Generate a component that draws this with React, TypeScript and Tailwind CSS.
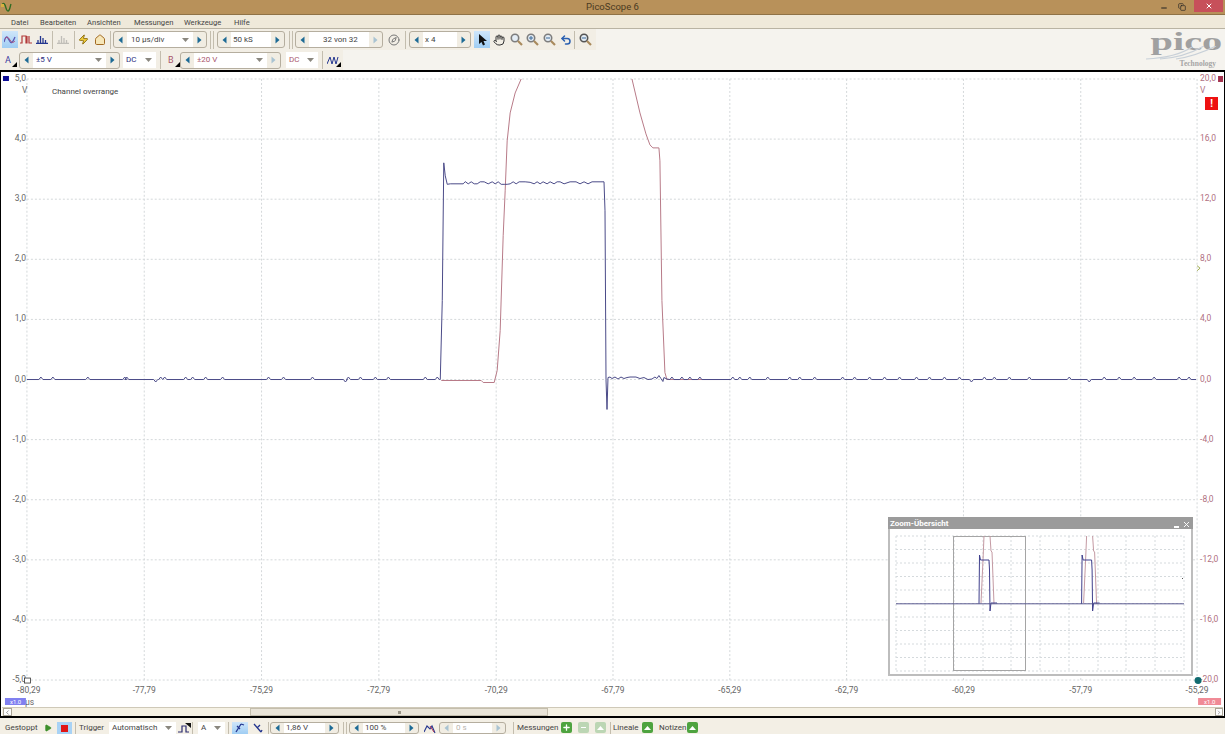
import type { ReactNode } from "react";
import { Hand, Home, Undo2, Compass, Zap, X, Minus, Copy, Play, ChevronLeft, ChevronRight, Plus } from "lucide-react";

const gridX = [26, 143.5, 261, 378.5, 496, 613, 730, 847, 964, 1081.5, 1198];
const gridY = [78, 138.2, 198.4, 258.6, 318.8, 379, 439.2, 499.4, 559.6, 619.8, 680];
const leftLabels = ["5,0", "4,0", "3,0", "2,0", "1,0", "0,0", "-1,0", "-2,0", "-3,0", "-4,0", "-5,0"];
const rightLabels = ["20,0", "16,0", "12,0", "8,0", "4,0", "0,0", "-4,0", "-8,0", "-12,0", "-16,0", "-20,0"];
const timeLabels = ["-80,29", "-77,79", "-75,29", "-72,79", "-70,29", "-67,79", "-65,29", "-62,79", "-60,29", "-57,79", "-55,29"];

// x position of the little noise bumps on the blue baseline, negative = downwards
const bumpsA = [40, 52, 87, 124, 126, -155, 160, 164, 185, 192, 205, 222, 268, 283, 312, -345, 348, 360, 375, 388, 425, 437];
const bumpsB = [672, 682, 690, 700, 733, 740, 750, 768, 790, 800, 815, 843, 855, 870, 885, 900, 917, 930, 945, 960, -972, 985, 995, 1010, 1030, 1070, -1090, 1105, 1120, 1135, 1155, 1180, 1190];

// top of the pulse, read off the reference
const rippleTop = "447,183.5 450,183 463,183 465,180.8 468,183 471,181 474,183 477,183 480,181 484,181 488,183 492,181 495,183 498,181 501,183.5 504,183.5 507,183.500 510,183 513,181 516,183 519,181 525,181 530,181.500 534,183 537,181 540,183 543,181 547,183 550,181 554,183 557,181 560,181 564,183 570,181 576,181 580,183 584,181 588,183 592,181 600,181 604,181";
const afterEdge = "608,377 610,376.500 612,378 615,376.500 618,378.500 621,376.500 624,378 627,377 630,376.500 636,376.500 640,378 644,377 648,379 652,378.500 655,376.500 657,378 659,375 661,378 663,381 664,377 667,378.500";

function baseline(bumps: number[]) {
  return bumps
    .map((b) => {
      const x = Math.abs(b);
      const y = b < 0 ? 381.5 : 376.5;
      return `${x - 2},379 ${x},${y} ${x + 2},379`;
    })
    .join(" ");
}

const bluePoints = `26,379 ${baseline(bumpsA)} 440,379 442,300 443.5,162 445,175 ${rippleTop} 605,210 606,379 607,409 ${afterEdge} ${baseline(bumpsB)} 1197,379`;
const redRise = "441,380 481,380 483,382 494,382 497,370 500,330 503,235 505,190 507,140 510,112 515,92 521,78";
const redFall = "632,78 640,112 646,133 650,144 653,147 659,147 660,160 662,300 665,372 667,379 720,379";

function Tri({ dir, off }: { dir: "l" | "r"; off?: boolean }) {
  return (
    <svg width="5" height="8" viewBox="0 0 5 8">
      <path d={dir === "l" ? "M4.5 0.5v7L0.5 4z" : "M0.5 0.5v7L4.5 4z"} fill={off ? "#a9c3d2" : "#1c6a95"} />
    </svg>
  );
}

function Chev({ color = "#8a877f" }: { color?: string }) {
  return (
    <svg width="7" height="4" viewBox="0 0 7 4">
      <path d="M0 0h7L3.5 4z" fill={color} />
    </svg>
  );
}

function Lens({ mark, color = "#7d7d7d" }: { mark?: "+" | "-"; color?: string }) {
  return (
    <svg width="13" height="13" viewBox="0 0 13 13">
      <circle cx="5" cy="5" r="3.7" fill="#e4edf5" stroke={color} strokeWidth="1.6" />
      <path d="M8 8l4 4" stroke="#a98a5c" strokeWidth="2.2" />
      {mark && <path d="M3 5h4" stroke="#3c6a9a" strokeWidth="1" />}
      {mark === "+" && <path d="M5 3v4" stroke="#3c6a9a" strokeWidth="1" />}
    </svg>
  );
}

function Sep({ className = "" }: { className?: string }) {
  return <div className={`w-[1px] h-[18px] bg-[#c3bdae] shrink-0 ${className}`} />;
}

function Btn({ children, active, className = "" }: { children: ReactNode; active?: boolean; className?: string }) {
  return (
    <div className={`w-[16px] h-[17px] shrink-0 flex items-center justify-center ${active ? "bg-gradient-to-b from-[#cfe6fa] to-[#9fcdf3]" : ""} ${className}`}>
      {children}
    </div>
  );
}

function Spin({ w, pad, text, off, color, dropdown, className = "" }: { w: number; pad?: number; text: string; off?: boolean; color?: string; dropdown?: boolean; className?: string }) {
  return (
    <div className={`flex items-center h-[17px] rounded-[3px] border border-[#b5ae9f] bg-[#f1ede3] shrink-0 ${className}`}>
      <div className="w-[13px] flex justify-center"><Tri dir="l" off={off} /></div>
      <div
        className="h-full bg-white flex items-center justify-between"
        style={{ width: w, paddingLeft: pad ?? 3, paddingRight: 4, color }}
      >
        <span className={off ? "text-[#b9b6ae]" : ""}>{text}</span>
        {dropdown && <Chev />}
      </div>
      <div className="w-[13px] flex justify-center"><Tri dir="r" off={off || text === "32 von 32" || text === "±20 V"} /></div>
    </div>
  );
}

function Drop({ w, text, color, className = "" }: { w: number; text: string; color?: string; className?: string }) {
  return (
    <div className={`h-[16px] bg-white flex items-center justify-between pl-[3px] pr-[4px] shrink-0 ${className}`} style={{ width: w, color }}>
      <span>{text}</span>
      <Chev />
    </div>
  );
}

function Green({ faded, children }: { faded?: boolean; children?: ReactNode }) {
  return (
    <div className={`w-[11px] h-[11px] rounded-[2px] flex items-center justify-center shrink-0 ${faded ? "bg-[#bcd6b4]" : "bg-[#4ea33f]"}`}>
      {children ?? <svg width="7" height="4" viewBox="0 0 7 4"><path d="M0 4L3.5 0 7 4z" fill="#fff" /></svg>}
    </div>
  );
}

function Corner() {
  return <span className="absolute right-0 bottom-[1px] w-0 h-0 border-l-[5px] border-l-transparent border-b-[5px] border-b-black" />;
}

function Chart() {
  return (
    <svg width="1223" height="636" viewBox="1 71 1223 636" className="block">
      <g stroke="#d4d8da" strokeWidth="1" strokeDasharray="2 2">
        {gridX.map((x) => <line key={x} x1={x} x2={x} y1={78} y2={680} />)}
        {gridY.map((y) => <line key={y} x1={26} x2={1198} y1={y} y2={y} />)}
      </g>
      <g fontSize="8.5" fill="#666">
        {leftLabels.map((l, i) => <text key={l} x={25} y={gridY[i] + 2} textAnchor="end">{l}</text>)}
        <text x={21} y={92.5}>V</text>
        {timeLabels.map((l, i) => <text key={l} x={i === 0 ? 28 : gridX[i]} y={693} textAnchor="middle">{l}</text>)}
        <text x={24} y={705}>µs</text>
      </g>
      <g fontSize="8.5" fill="#b0707f">
        {rightLabels.map((l, i) => <text key={l} x={1201} y={gridY[i] + 2}>{l}</text>)}
        <text x={1201} y={92.5}>V</text>
      </g>
      <polyline points={redRise} fill="none" stroke="#b87a88" strokeWidth="1" />
      <polyline points={redFall} fill="none" stroke="#b87a88" strokeWidth="1" />
      <polyline points={bluePoints} fill="none" stroke="#4a4a88" strokeWidth="1" />
      <rect x={2} y={75} width={6} height={5} fill="#0b0b96" />
      <rect x={1219} y={75} width={5} height={6} fill="#a3324e" />
      <rect x={23.5} y={678} width={6} height={5} fill="#fff" stroke="#333" strokeWidth="0.8" />
      <circle cx={1199} cy={680.5} r={3.5} fill="#116b70" />
      <path d="M1198 265l3 2.5-3 2.5" fill="none" stroke="#a0ad50" strokeWidth="1" />
      <rect x={4} y={698} width={21} height={7} fill="#8080f0" />
      <text x={9} y={704} fontSize="6" fill="#fff">x1.0</text>
      <rect x={1199} y={698} width={23} height={7} fill="#f08a96" />
      <text x={1205} y={704} fontSize="6" fill="#fff">x1.0</text>
    </svg>
  );
}

function Overview() {
  const xs = [896, 925, 954, 983, 1011, 1040, 1069, 1098, 1126, 1155, 1184];
  const ys = [536, 549.5, 563, 576.5, 590, 603.5, 617, 630.5, 644, 657.5, 671];
  return (
    <div className="absolute left-[888px] top-[517px] w-[305px] h-[159px] border-2 border-t-0 border-[#bdbdbd] bg-white flex flex-col">
      <div className="h-[12px] -mx-[2px] bg-[#9b9b9b] text-white font-bold text-[8px] leading-[12px] pl-[2px] pt-[2px] flex items-center justify-between">
        <span>Zoom-Übersicht</span>
        <div className="flex items-center gap-[3px] pr-[2px]">
          <div className="w-[5px] h-[2px] bg-white mt-[5px]" />
          <X size={9} strokeWidth={2.5} color="#fff" />
        </div>
      </div>
      <svg width="301" height="145" viewBox="890 529 301 145" className="block">
        <g stroke="#d5dadd" strokeDasharray="2 2">
          {xs.map((x) => <line key={x} x1={x} x2={x} y1={536} y2={671} />)}
          {ys.map((y) => <line key={y} x1={896} x2={1184} y1={y} y2={y} />)}
        </g>
        <rect x={953.5} y={536.5} width={72} height={134} fill="none" stroke="#a5a5a5" />
        {[0, 102.6].map((d) => (
          <g key={d} transform={`translate(${d} 0)`} fill="none">
            <polyline points="981,603 983,560 984,536" stroke="#c49aa3" />
            <polyline points="990,536 991,551 992,552 994,604" stroke="#c49aa3" />
            <polyline points="979,604 979.5,555 980.5,560 989,560 989.5,570 990,611 991,603 997,603" stroke="#3f3f8c" />
          </g>
        ))}
        <line x1={896} x2={1184} y1={603.8} y2={603.8} stroke="#5a5a90" />
        <rect x={1182} y={578} width={1} height={1} fill="#555" />
      </svg>
    </div>
  );
}

export default function App() {
  return (
    <div className="w-[1230px] h-[734px] bg-white overflow-hidden font-['Roboto',sans-serif] text-[8px] text-[#444]">
      <div className="w-[1225px] h-[734px] flex flex-col relative">
        {/* title bar */}
        <div className="h-[15px] bg-[#b8915a] border-b border-[#8f7246] flex items-center justify-between relative shrink-0">
          <svg width="12" height="11" viewBox="0 0 12 11" className="ml-[1px]">
            <path d="M1 3c1-2 2-2 3 0s1 6 3 6 2-5 3-7" fill="none" stroke="#2e6b22" strokeWidth="1.4" />
            <rect x="0" y="2" width="3" height="3" fill="#d8b040" />
          </svg>
          <span className="absolute inset-x-0 pt-[1px] text-center text-[9.5px] text-[#4a3a22]">PicoScope 6</span>
          <div className="flex items-center relative">
            <Minus size={8} strokeWidth={3} color="#222" className="mr-[10px] mt-[2px]" />
            <Copy size={8} strokeWidth={2} color="#222" className="mr-[8px]" />
            <div className="w-[29px] h-[12px] -mt-[2px] mr-[2px] bg-[#c7505a] flex items-center justify-center">
              <X size={8} strokeWidth={3} color="#fff" />
            </div>
          </div>
        </div>

        {/* menu */}
        <div className="h-[14px] pt-[2px] bg-[#efe9da] border-b border-[#b9b3a3] flex items-center shrink-0 text-[7.6px]">
          <span className="ml-[11px] w-[29px]">Datei</span>
          <span className="w-[47px]">Bearbeiten</span>
          <span className="w-[47px]">Ansichten</span>
          <span className="w-[50px]">Messungen</span>
          <span className="w-[50px]">Werkzeuge</span>
          <span>Hilfe</span>
        </div>

        {/* toolbars + logo */}
        <div className="h-[41px] bg-[#f5f3ee] flex shrink-0 relative">
          <div className="flex flex-col">
            <div className="h-[21px] w-[596px] flex items-center pl-[2px] bg-[#f2eee5]">
              <Btn active>
                <svg width="12" height="9" viewBox="0 0 12 9"><path d="M0 7c2-7 3-6 5-2s3 4 6-3" fill="none" stroke="#5a5ab5" strokeWidth="1.3" /><path d="M1 4c2-3 3-2 5 1s3 3 5 1" fill="none" stroke="#b0507a" strokeWidth="1" /></svg>
              </Btn>
              <Btn>
                <svg width="12" height="9" viewBox="0 0 12 9"><path d="M0 8h2V1h4v7h1V1M9 1v7h3" fill="none" stroke="#b23a3a" strokeWidth="1.2" /></svg>
              </Btn>
              <Btn>
                <svg width="12" height="9" viewBox="0 0 12 9"><path d="M0 8.5h12M2 8V5M4.5 8V1M7 8V3M9.5 8V5" stroke="#23358f" strokeWidth="1.3" /></svg>
              </Btn>
              <Sep className="ml-[2px]" />
              <Btn className="ml-[2px] opacity-40">
                <svg width="12" height="9" viewBox="0 0 12 9"><path d="M0 8.5h12M2 8V5M4.5 8V1M7 8V3M9.5 8V5" stroke="#777" strokeWidth="1.3" /></svg>
              </Btn>
              <Sep className="ml-[3px]" />
              <Btn><Zap size={11} color="#8a6a10" fill="#f2cf3a" /></Btn>
              <Btn className="ml-[1px]"><Home size={12} color="#a26a22" fill="#f6e6b8" /></Btn>
              <Sep className="ml-[2px]" />
              <Spin className="ml-[2px]" w={66} pad={4} text="10 µs/div" dropdown />
              <Sep className="ml-[3px]" />
              <Sep className="ml-[2px]" />
              <Spin className="ml-[3px]" w={40} pad={2} text="50 kS" />
              <Sep className="ml-[4px]" />
              <Sep className="ml-[2px]" />
              <Spin className="ml-[2px]" w={60} pad={14} text="32 von 32" />
              <Btn className="ml-[3px]"><Compass size={12} color="#777" /></Btn>
              <Sep className="ml-[3px]" />
              <Spin className="ml-[3px]" w={34} pad={2} text="x 4" />
              <Btn active className="ml-[3px]">
                <svg width="9" height="12" viewBox="0 0 9 12"><path d="M1 0v10l2.500-2 1.500 3.500 2-1L5.500 7H9z" fill="#111" /></svg>
              </Btn>
              <Btn className="ml-[1px]"><Hand size={12} color="#333" /></Btn>
              <Btn className="ml-[1px]"><Lens /></Btn>
              <Btn><Lens mark="+" /></Btn>
              <Btn className="ml-[1px]"><Lens mark="-" /></Btn>
              <Btn className="ml-[1px]"><Undo2 size={12} color="#2a5fb0" strokeWidth={3} /></Btn>
              <Sep />
              <Btn className="ml-[2px]"><Lens mark="-" color="#555" /></Btn>
            </div>
            <div className="h-[20px] w-[343px] flex items-center bg-[#f2eee5]">
              <div className="w-[17px] pl-[5px] relative text-[#3a3aa0] text-[9px] h-[16px] leading-[16px] shrink-0">A<Corner /></div>
              <Spin className="ml-[2px]" w={73} text="±5 V" dropdown color="#2c2c80" />
              <Drop className="ml-[3px]" w={33} text="DC" color="#2c2c80" />
              <Sep className="ml-[4px]" />
              <div className="w-[17px] pl-[5px] ml-[2px] relative text-[#a9566c] text-[9px] h-[16px] leading-[16px] shrink-0">B<Corner /></div>
              <Spin w={73} text="±20 V" dropdown color="#a9566c" />
              <Drop className="ml-[5px]" w={32} text="DC" color="#a9566c" />
              <Sep className="ml-[4px]" />
              <div className="w-[16px] h-[16px] ml-[2px] relative flex items-center justify-center shrink-0">
                <svg width="12" height="9" viewBox="0 0 12 9"><path d="M0 8L3 1l2 7 2-7 2 7 2-7" fill="none" stroke="#23358f" strokeWidth="1" /></svg>
                <Corner />
              </div>
            </div>
          </div>
          {/* logo */}
          <div className="absolute left-[1146px] top-[-2px] w-[78px] h-[40px] flex flex-col items-end">
            <span className="font-['Liberation_Serif',serif] text-[26px] leading-[30px] origin-right [transform:scaleX(1.55)] mr-[2px] text-[#a0a0a0] font-bold">pico</span>
            <svg width="74" height="14" viewBox="0 0 74 14" className="absolute left-0 top-[19px]">
              <path d="M0 13C20 12 34 9 46 1M14 13C30 12 44 8 58 0M30 13C44 11 56 7 70 0" fill="none" stroke="#c8d0d8" strokeWidth="1.2" />
            </svg>
            <span className="font-['Liberation_Serif',serif] text-[7.5px] leading-[9px] font-bold text-[#a5a5a5] mt-[2px] mr-[8px]">Technology</span>
          </div>
        </div>

        {/* scope view */}
        <div className="flex-1 bg-white border-t-2 border-b-2 border-x border-black relative min-h-0 flex flex-col">
          <Chart />
          <div className="absolute left-[51px] top-[15px] text-[8px] leading-[10px] text-[#444]">Channel overrange</div>
          <div className="absolute left-[1204px] top-[25px] w-[13px] h-[13px] bg-[#ee1111] text-white font-bold text-[10px] leading-[13px] text-center">!</div>
          <div className="h-[9px] mx-[1px] flex items-stretch bg-[#f5f1e4] border-t border-[#cfc9b8]">
            <div className="w-[9px] flex items-center justify-center border border-[#a9a496] bg-white ml-[1px]"><ChevronLeft size={7} color="#555" /></div>
            <div className="w-[238px]" />
            <div className="w-[298px] bg-[#e9e4d8] border border-[#c4bead] flex items-center justify-center">
              <div className="w-[3px] h-[3px] bg-[#9a9587]" />
            </div>
            <div className="flex-1" />
            <div className="w-[8px] flex items-center justify-center border border-[#a9a496] bg-white"><ChevronRight size={7} color="#555" /></div>
          </div>
        </div>

        {/* status bar */}
        <div className="h-[16px] pt-[4px] bg-[#f3efe5] flex items-center shrink-0 pl-[5px] [&>div]:!h-[12px]">
          <span className="w-[37px]">Gestoppt</span>
          <Play size={8} color="#3d8f2c" fill="#3d8f2c" className="ml-[2px]" />
          <div className="w-[15px] ml-[5px] bg-[#a8d2f5] flex items-center justify-center">
            <div className="w-[7px] h-[7px] bg-[#e01515]" />
          </div>
          <Sep className="ml-[3px]" />
          <span className="ml-[3px] w-[27px]">Trigger</span>
          <Drop className="ml-[3px]" w={67} text="Automatisch" />
          <Btn>
            <svg width="13" height="11" viewBox="0 0 13 11"><path d="M0 9h4V3h4v6h3" fill="none" stroke="#2c2c70" strokeWidth="1.2" /><path d="M7 0h6v5z" fill="#111" /></svg>
          </Btn>
          <Sep />
          <Drop className="ml-[5px]" w={27} text="A" />
          <Sep className="ml-[3px]" />
          <Btn active className="ml-[3px]">
            <svg width="10" height="10" viewBox="0 0 10 10"><path d="M1 9L6 1M2 3l3 3M6 1l3 1" fill="none" stroke="#23358f" strokeWidth="1.3" /></svg>
          </Btn>
          <Btn className="ml-[2px]">
            <svg width="10" height="10" viewBox="0 0 10 10"><path d="M1 1l7 8M4 5l3-3M8 9l1-2" fill="none" stroke="#23358f" strokeWidth="1.3" /></svg>
          </Btn>
          <Sep className="ml-[2px]" />
          <Spin className="ml-[1px]" w={41} pad={2} text="1,86 V" />
          <Sep className="ml-[4px]" />
          <Sep className="ml-[2px]" />
          <Spin className="ml-[2px]" w={42} pad={2} text="100 %" />
          <Btn className="ml-[3px]">
            <svg width="13" height="11" viewBox="0 0 13 11"><path d="M0 9l3-6 3 3 2-3 3 7" fill="none" stroke="#23358f" strokeWidth="1.1" /><path d="M6 3l4 6" stroke="#b03050" /></svg>
          </Btn>
          <Spin className="ml-[1px]" w={39} pad={3} text="0 s" off />
          <Sep className="ml-[7px]" />
          <span className="ml-[3px] w-[44px]">Messungen</span>
          <div>
            <Green><Plus size={9} strokeWidth={3.5} color="#fff" /></Green>
          </div>
          <div className="ml-[6px]">
            <Green faded><div className="w-[5px] h-[1px] bg-white" /></Green>
          </div>
          <div className="ml-[6px]"><Green faded /></div>
          <Sep className="ml-[4px]" />
          <span className="ml-[2px] w-[28px]">Lineale</span>
          <div className="ml-[1px]"><Green /></div>
          <span className="ml-[6px] w-[28px]">Notizen</span>
          <div><Green /></div>
        </div>

        <Overview />
      </div>
    </div>
  );
}
